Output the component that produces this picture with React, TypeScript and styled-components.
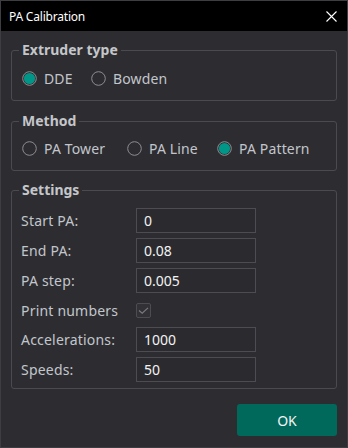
import React from "react";
import styled, { createGlobalStyle } from "styled-components";

const Global = createGlobalStyle`
  html, body { margin: 0; padding: 0; background: #2d2d31; }
  body {
    width: 348px; height: 448px; overflow: hidden;
    font-family: "Noto Sans", "Segoe UI", sans-serif;
  }
  * { box-sizing: border-box; }
`;

const Window = styled.div`
  width: 348px;
  height: 448px;
  border: 1px solid #3e3e42;
  background: #2d2d31;
  display: flex;
  flex-direction: column;
`;

const TitleBar = styled.div`
  height: 30px;
  flex: none;
  background: #000;
  display: flex;
  align-items: center;
  justify-content: space-between;
  padding: 0 10px 0 8px;
  color: #fff;
  font-size: 12px;
  letter-spacing: -0.2px;
`;

const Body = styled.div`
  flex: 1;
  display: flex;
  flex-direction: column;
  padding: 10px 10px 0 10px;
`;

const Group = styled.fieldset<{ $top: number; $pt: number; $pb: number }>`
  margin: ${(p) => p.$top}px 0 0 0;
  padding: ${(p) => p.$pt}px 10px ${(p) => p.$pb}px 9px;
  border: 1px solid #4a4a50;
  border-radius: 3px;
  min-width: 0;
`;

const Legend = styled.legend`
  margin-left: -2px;
  padding: 0 3px;
  font-size: 14px;
  line-height: 18px;
  font-weight: 700;
  color: #c4c6ca;
`;

const RadioRow = styled.div`
  display: flex;
  align-items: center;
  height: 20px;
  padding-left: 1px;
`;

const RadioOption = styled.label<{ $w?: number }>`
  display: inline-flex;
  align-items: center;
  gap: 7px;
  width: ${(p) => (p.$w ? `${p.$w}px` : "auto")};
  font-size: 14px;
  letter-spacing: 0.15px;
  color: #c2c6cc;
  white-space: nowrap;
`;

const Radio = ({ checked }: { checked?: boolean }) => (
  <svg width="15" height="15" viewBox="0 0 15 15">
    <circle cx="7.5" cy="7.5" r="6.8" fill="none" stroke="#8e8e92" strokeWidth="1" />
    {checked && <circle cx="7.5" cy="7.5" r="5.6" fill="#009688" />}
  </svg>
);

const Grid = styled.div`
  display: grid;
  grid-template-columns: 115px 120px;
  grid-template-rows: 25px 25px 25px 24px 25px 25px;
  row-gap: 5px;
  align-items: center;
`;

const Label = styled.span`
  font-size: 14px;
  letter-spacing: 0.2px;
  color: #c2c6cc;
  white-space: nowrap;
`;

const Input = styled.div`
  height: 25px;
  border: 1px solid #4c4c52;
  background: #2b2b2f;
  padding-left: 7px;
  display: flex;
  align-items: center;
  font-size: 14px;
  color: #f2f2f2;
`;

const CheckBox = styled.div`
  width: 15px;
  height: 15px;
  border: 1px solid #4c4c52;
  border-radius: 2px;
  background: #323236;
  display: flex;
  align-items: center;
  justify-content: center;
`;

const Footer = styled.div`
  display: flex;
  justify-content: flex-end;
  margin-top: 15px;
`;

const OkButton = styled.button`
  width: 100px;
  height: 32px;
  border: none;
  border-radius: 3px;
  background: #00695c;
  color: #f4f4f4;
  font-family: inherit;
  font-size: 14px;
  padding: 0;
`;

const rows: [string, string][] = [
  ["Start PA:", "0"],
  ["End PA:", "0.08"],
  ["PA step:", "0.005"],
];

export default function App() {
  return (
    <>
      <Global />
      <Window>
        <TitleBar>
          <span>PA Calibration</span>
          <svg width="11" height="11" viewBox="0 0 11 11">
            <path d="M0.5 0.5 L10.5 10.5 M10.5 0.5 L0.5 10.5" stroke="#fff" strokeWidth="1.1" />
          </svg>
        </TitleBar>
        <Body>
          <Group $top={0} $pt={9} $pb={12}>
            <Legend>Extruder type</Legend>
            <RadioRow>
              <RadioOption $w={69}>
                <Radio checked />
                DDE
              </RadioOption>
              <RadioOption>
                <Radio />
                Bowden
              </RadioOption>
            </RadioRow>
          </Group>
          <Group $top={11} $pt={8} $pb={12}>
            <Legend>Method</Legend>
            <RadioRow>
              <RadioOption $w={105}>
                <Radio />
                PA Tower
              </RadioOption>
              <RadioOption $w={90}>
                <Radio />
                PA Line
              </RadioOption>
              <RadioOption>
                <Radio checked />
                PA Pattern
              </RadioOption>
            </RadioRow>
          </Group>
          <Group $top={10} $pt={9} $pb={6}>
            <Legend>Settings</Legend>
            <Grid>
              {rows.map(([l, v]) => (
                <React.Fragment key={l}>
                  <Label>{l}</Label>
                  <Input>{v}</Input>
                </React.Fragment>
              ))}
              <Label>Print numbers</Label>
              <CheckBox>
                <svg width="11" height="9" viewBox="0 0 11 9">
                  <path d="M1 4.5 L4.2 7.2 L10 1.8" fill="none" stroke="#7a7a80" strokeWidth="1.1" />
                </svg>
              </CheckBox>
              <Label>Accelerations:</Label>
              <Input>1000</Input>
              <Label>Speeds:</Label>
              <Input>50</Input>
            </Grid>
          </Group>
          <Footer>
            <OkButton>OK</OkButton>
          </Footer>
        </Body>
      </Window>
    </>
  );
}
